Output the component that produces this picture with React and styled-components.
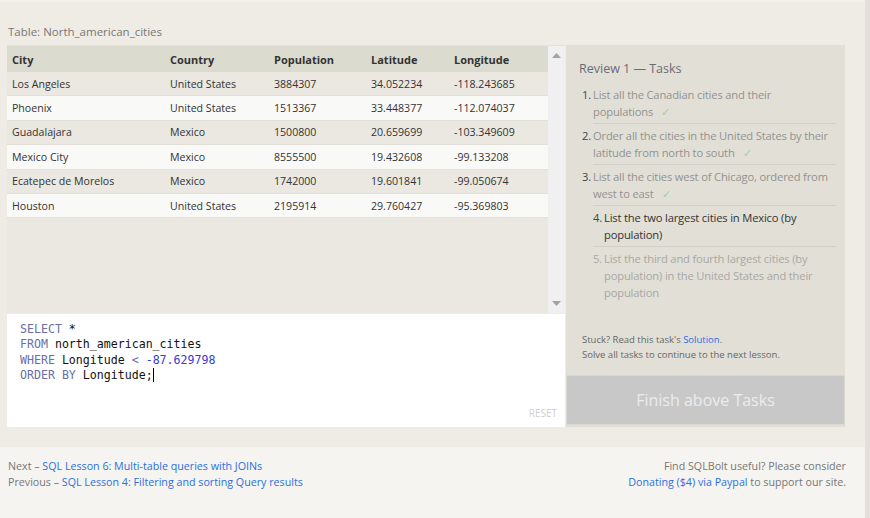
import React from "react"
import styled, { createGlobalStyle } from "styled-components"

const columns = ["City", "Country", "Population", "Latitude", "Longitude"]

const cities = [
  ["Los Angeles", "United States", "3884307", "34.052234", "-118.243685"],
  ["Phoenix", "United States", "1513367", "33.448377", "-112.074037"],
  ["Guadalajara", "Mexico", "1500800", "20.659699", "-103.349609"],
  ["Mexico City", "Mexico", "8555500", "19.432608", "-99.133208"],
  ["Ecatepec de Morelos", "Mexico", "1742000", "19.601841", "-99.050674"],
  ["Houston", "United States", "2195914", "29.760427", "-95.369803"],
]

const tasks = [
  { text: "List all the Canadian cities and their populations", state: "done" },
  { text: "Order all the cities in the United States by their latitude from north to south", state: "done" },
  { text: "List all the cities west of Chicago, ordered from west to east", state: "done" },
  { text: "List the two largest cities in Mexico (by population)", state: "current" },
  { text: "List the third and fourth largest cities (by population) in the United States and their population", state: "todo" },
]

const App = () => {
  return (
    <>
      <GlobalStyle />
      <Shell>
        <Page>
          <Lesson>
            <TableLabel>Table: North_american_cities</TableLabel>
            <Workspace>
              <LeftColumn>
                <TableArea>
                  <TableScroll>
                    <HeaderRow>
                      {columns.map((c) => (
                        <HeadCell key={c}>{c}</HeadCell>
                      ))}
                    </HeaderRow>
                    {cities.map((row, i) => (
                      <Row key={row[0]} $odd={i % 2 === 1}>
                        {row.map((v, j) => (
                          <Cell key={j}>{v}</Cell>
                        ))}
                      </Row>
                    ))}
                  </TableScroll>
                  <ScrollBar>
                    <Arrow viewBox="0 0 9 5"><path d="M0 5 L4.5 0 L9 5 Z" /></Arrow>
                    <Arrow viewBox="0 0 9 5"><path d="M0 0 L4.5 5 L9 0 Z" /></Arrow>
                  </ScrollBar>
                </TableArea>
                <Editor>
                  <Code>
                    <Line><Kw>SELECT</Kw> *</Line>
                    <Line><Kw>FROM</Kw> north_american_cities</Line>
                    <Line><Kw>WHERE</Kw> Longitude <Kw>&lt;</Kw> <Num>-87.629798</Num></Line>
                    <Line><Kw>ORDER BY</Kw> Longitude;<Caret /></Line>
                  </Code>
                  <ResetButton>RESET</ResetButton>
                </Editor>
              </LeftColumn>
              <TasksPanel>
                <TasksBody>
                  <TasksTitle>Review 1 — Tasks</TasksTitle>
                  <TaskList>
                    {tasks.map((t, i) => (
                      <Task key={i} $state={t.state}>
                        <TaskNum $state={t.state}>{i + 1}.</TaskNum>
                        <TaskText>
                          {t.text}
                          {t.state === "done" && <Check>✓</Check>}
                        </TaskText>
                      </Task>
                    ))}
                  </TaskList>
                </TasksBody>
                <Hints>
                  <Hint>Stuck? Read this task's <Link>Solution</Link>.</Hint>
                  <Hint>Solve all tasks to continue to the next lesson.</Hint>
                </Hints>
                <FinishButton>Finish above Tasks</FinishButton>
              </TasksPanel>
            </Workspace>
          </Lesson>
          <Footer>
            <FooterCol>
              <div>Next – <Link>SQL Lesson 6: Multi-table queries with JOINs</Link></div>
              <div>Previous – <Link>SQL Lesson 4: Filtering and sorting Query results</Link></div>
            </FooterCol>
            <FooterCol $right>
              <div>Find SQLBolt useful? Please consider</div>
              <div><Link>Donating ($4) via Paypal</Link> to support our site.</div>
            </FooterCol>
          </Footer>
        </Page>
        <WindowEdge />
      </Shell>
    </>
  )
}

const GlobalStyle = createGlobalStyle`
  body {
    margin: 0;
    background: #f5f4f0;
    font-family: "Open Sans", "Noto Sans", sans-serif;
  }
`

const Shell = styled.div`
  display: grid;
  grid-template-columns: 1fr 5px;
  height: 518px;
  overflow: hidden;
`

const WindowEdge = styled.div`
  background: #e4dfdb;
`

const Page = styled.div`
  display: flex;
  flex-direction: column;
`

const Lesson = styled.div`
  background: #efece5;
  border-top: 2px solid #f3f1ec;
  padding: 22px 20px 20px 7px;
  height: 447px;
  box-sizing: border-box;
`

const TableLabel = styled.div`
  font-size: 11.5px;
  color: #777;
  padding-left: 1px;
  height: 21px;
  line-height: 16px;
`

const Workspace = styled.div`
  display: flex;
  gap: 1px;
  height: 382px;
`

const LeftColumn = styled.div`
  width: 558px;
  display: flex;
  flex-direction: column;
  gap: 1px;
`

const TableArea = styled.div`
  display: flex;
  height: 267px;
  background: #eae8e1;
  border-top: 1px solid #e4e2da;
`

const TableScroll = styled.div`
  flex: 1;
`

const grid = `
  display: grid;
  grid-template-columns: 158px 104px 97px 83px 1fr;
  padding-left: 5px;
  box-sizing: border-box;
  align-items: center;
`

const HeaderRow = styled.div`
  ${grid}
  height: 26px;
  background: #dcdbd0;
`

const HeadCell = styled.div`
  font-size: 11px;
  font-weight: 700;
  color: #333;
`

const Row = styled.div`
  ${grid}
  height: 24.4px;
  background: ${(p) => (p.$odd ? "#f9f9f8" : "#eae8e1")};
  border-bottom: 1px solid #e2e0d9;
`

const Cell = styled.div`
  font-size: 10.6px;
  color: #333;
  white-space: nowrap;
`

const ScrollBar = styled.div`
  width: 17px;
  background: #f0f0f0;
  display: flex;
  flex-direction: column;
  justify-content: space-between;
  align-items: center;
  padding: 7px 0 7px;
`

const Arrow = styled.svg`
  width: 9px;
  height: 5px;
  fill: #a3a3a3;
`

const Editor = styled.div`
  flex: 1;
  background: #fff;
  position: relative;
  padding: 8px 13px;
`

const Code = styled.div`
  font-family: "DejaVu Sans Mono", "Liberation Mono", monospace;
  font-size: 11.6px;
  line-height: 15.3px;
  color: #111;
`

const Line = styled.div`
  white-space: pre;
  height: 15.3px;
`

const Kw = styled.span`
  color: #6770a8;
`

const Num = styled.span`
  color: #3a3ad4;
`

const Caret = styled.span`
  display: inline-block;
  width: 1px;
  height: 14px;
  background: #000;
  vertical-align: -3px;
`

const ResetButton = styled.div`
  position: absolute;
  right: 8px;
  bottom: 7px;
  font-size: 10px;
  color: #cfcfcf;
`

const TasksPanel = styled.div`
  width: 279px;
  background: #e2e0d6;
  display: flex;
  flex-direction: column;
`

const TasksBody = styled.div`
  flex: 1;
  padding: 15px 9px 0 13px;
`

const TasksTitle = styled.div`
  font-size: 12.5px;
  color: #6b6b78;
  margin-bottom: 6px;
`

const TaskList = styled.div`
  display: flex;
  flex-direction: column;
  padding-left: 3px;
`

const Task = styled.div`
  display: flex;
  font-size: 11.2px;
  letter-spacing: -0.17px;
  line-height: 17px;
  padding: 3px 0 3px;
  color: ${(p) => (p.$state === "done" ? "#929292" : p.$state === "current" ? "#333" : "#a7a7a7")};

  & + & {
    border-top: 1px solid #d2d0c7;
    margin-left: 11px;
  }
  & + & > span:first-child {
    margin-left: -11px;
  }
`

const TaskNum = styled.span`
  width: 11px;
  flex: none;
  color: ${(p) => (p.$state === "todo" ? "#a7a7a7" : "#444")};
`

const TaskText = styled.span`
  flex: 1;
`

const Check = styled.span`
  color: #9fd19a;
  margin-left: 8px;
`

const Hints = styled.div`
  padding: 0 0 13px 16px;
`

const Hint = styled.div`
  font-size: 9.5px;
  line-height: 15px;
  color: #666;
`

const Link = styled.span`
  color: #2d6fe0;
`

const FinishButton = styled.div`
  height: 50px;
  margin-bottom: 2px;
  background: #c8c8c8;
  border: 1px solid #d9d8d2;
  box-sizing: border-box;
  display: flex;
  align-items: center;
  justify-content: center;
  font-size: 16px;
  color: #ececec;
`

const Footer = styled.div`
  flex: 1;
  display: flex;
  justify-content: space-between;
  padding: 11px 19px 0 8px;
  font-size: 10.7px;
  line-height: 16px;
  color: #777;
`

const FooterCol = styled.div`
  text-align: ${(p) => (p.$right ? "right" : "left")};
`

export default App
